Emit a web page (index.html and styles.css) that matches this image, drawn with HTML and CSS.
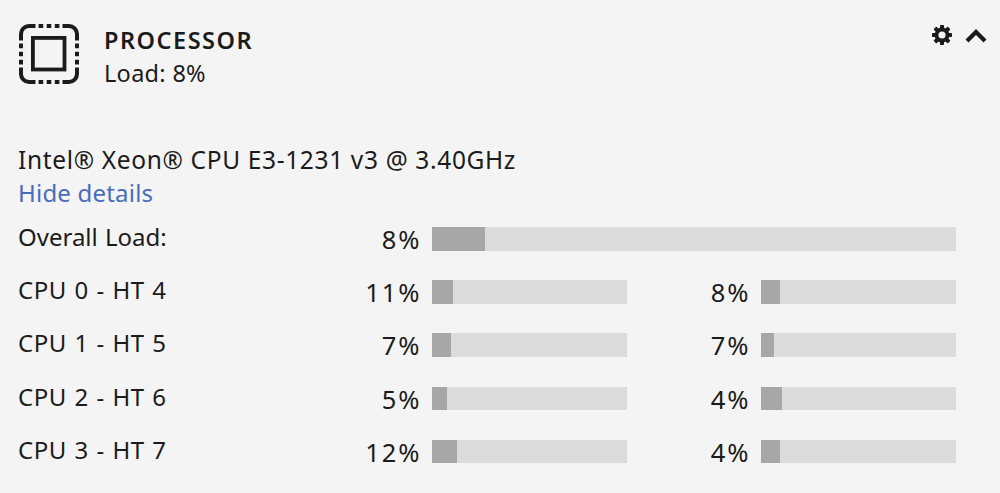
FILE: index.html
```html
<!DOCTYPE html>
<html lang="en">
<head>
    <meta charset="UTF-8">
    <meta name="viewport" content="width=device-width, initial-scale=1.0">
    <title>Processor</title>
    <link rel="stylesheet" href="styles.css">
</head>
<body>
    <div class="tile">
        <div class="tile-header">
            <svg class="cpu-icon" viewBox="0 0 60 60" fill="none" stroke="currentColor">
                <path stroke-width="4" d="M2 16.5V10a8 8 0 0 1 8-8h6.5M43.5 2H50a8 8 0 0 1 8 8v6.5M58 43.5V50a8 8 0 0 1-8 8h-6.5M16.5 58H10a8 8 0 0 1-8-8v-6.5"/>
                <path stroke-width="4" stroke-dasharray="4.6 3.5" d="M19.6 2h21M19.6 58h21M2 19.6v21M58 19.6v21"/>
                <rect stroke-width="3.8" x="13.9" y="13.9" width="31.6" height="31.6"/>
            </svg>
            <div class="heading">
                <h2 class="title">PROCESSOR</h2>
                <span class="load">Load: 8%</span>
            </div>
            <div class="controls">
                <svg class="gear" viewBox="0 0 20 20">
                    <g fill="currentColor">
                        <rect x="8" y="0" width="4" height="20" rx=".8"/>
                        <rect x="8" y="0" width="4" height="20" rx=".8" transform="rotate(45 10 10)"/>
                        <rect x="8" y="0" width="4" height="20" rx=".8" transform="rotate(90 10 10)"/>
                        <rect x="8" y="0" width="4" height="20" rx=".8" transform="rotate(135 10 10)"/>
                        <circle cx="10" cy="10" r="7.4"/>
                    </g>
                    <circle cx="10" cy="10" r="3.6" fill="#f4f4f4"/>
                </svg>
                <svg class="chevron" viewBox="0 0 22 14" fill="none" stroke="currentColor" stroke-width="4.2">
                    <path d="M2 12l9-9 9 9"/>
                </svg>
            </div>
        </div>
        <div class="model">Intel® Xeon® CPU E3-1231 v3 @ 3.40GHz</div>
        <a class="toggle" href="#">Hide details</a>
        <div class="row">
            <span class="label overall">Overall Load:</span>
            <span class="pct">8%</span>
            <div class="bar wide"><div class="fill" style="width: 53px"></div></div>
        </div>
        <div class="row">
            <span class="label">CPU 0 - HT 4</span>
            <span class="pct">11%</span>
            <div class="bar"><div class="fill" style="width: 21px"></div></div>
            <span class="pct">8%</span>
            <div class="bar"><div class="fill" style="width: 18.6px"></div></div>
        </div>
        <div class="row">
            <span class="label">CPU 1 - HT 5</span>
            <span class="pct">7%</span>
            <div class="bar"><div class="fill" style="width: 19px"></div></div>
            <span class="pct">7%</span>
            <div class="bar"><div class="fill" style="width: 13px"></div></div>
        </div>
        <div class="row">
            <span class="label">CPU 2 - HT 6</span>
            <span class="pct">5%</span>
            <div class="bar"><div class="fill" style="width: 15px"></div></div>
            <span class="pct">4%</span>
            <div class="bar"><div class="fill" style="width: 20.6px"></div></div>
        </div>
        <div class="row">
            <span class="label">CPU 3 - HT 7</span>
            <span class="pct">12%</span>
            <div class="bar"><div class="fill" style="width: 25px"></div></div>
            <span class="pct">4%</span>
            <div class="bar"><div class="fill" style="width: 18.6px"></div></div>
        </div>
    </div>
</body>
</html>
```
FILE: styles.css
```css
* { box-sizing: border-box; }
body { margin: 0; background-color: #f4f4f4; color: #1c1b1b; font-family: "Noto Sans", sans-serif; font-size: 24px; line-height: 33px; white-space: nowrap; overflow: hidden; }
.tile { padding: 24px 0 0 18px; }
.tile-header { display: flex; height: 119px; }
.cpu-icon { width: 60px; height: 60px; margin: 0 25px 0 1px; }
.heading { flex: 1; }
.title { margin: 0; font-size: 23.5px; font-weight: 600; line-height: 33px; letter-spacing: 1.5px; }
.load { display: block; font-size: 23.5px; letter-spacing: 0.3px; }
.controls { display: flex; align-items: flex-start; gap: 13px; padding: 1px 13px 0 0; }
.gear { width: 20px; height: 20px; }
.chevron { width: 22px; height: 14px; margin-top: 4px; }
.model { font-size: 24.5px; letter-spacing: 0.65px; }
.toggle { display: block; height: 51px; color: #486dba; text-decoration: none; letter-spacing: 0.2px; line-height: 34px; }
.row { display: grid; grid-template-columns: 300px 102px 12px 195px 122px 12px 195px; align-items: start; height: 53.2px; }
.label { grid-column: 1; line-height: 20px; letter-spacing: 0.5px; word-spacing: 1px; }
.label.overall { letter-spacing: 0; }
.pct { text-align: right; font-size: 25.5px; line-height: 25px; letter-spacing: 2px; margin-right: -1.5px; }
.bar { height: 23.6px; background-color: #dbdbdb; }
.pct + .bar { grid-column: 4; }
.bar + .pct { grid-column: 5; }
.bar + .pct + .bar { grid-column: 7; }
.pct + .bar.wide { grid-column: 4 / 8; }
.fill { height: 100%; background-color: #a7a7a7; }
```
